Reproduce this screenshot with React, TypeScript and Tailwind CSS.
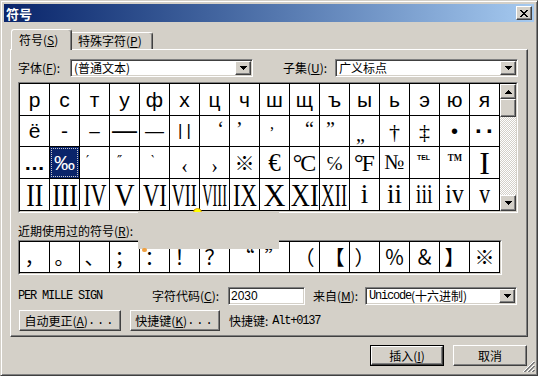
import React from "react";

const CJK = "font-['Noto_Sans_CJK_SC',sans-serif]";
const SANS = "font-['Liberation_Sans',sans-serif]";
const SERIF = "font-['Liberation_Serif','DejaVu_Serif',serif]";
const DJ = "font-['DejaVu_Sans',sans-serif]";
const MONO = "font-['Liberation_Mono',monospace] text-[12px] tracking-[-1.2px]";

const raised =
  "border border-t-white border-l-white border-r-[#404040] border-b-[#404040] shadow-[inset_-1px_-1px_#808080] bg-[#d4d0c8]";
const sunken =
  "border border-t-[#808080] border-l-[#808080] border-r-white border-b-white shadow-[inset_1px_1px_#404040,inset_-1px_-1px_#d4d0c8]";

const C = "items-center justify-center";

type G = [string, string, string?];

const row1: G[] = "рстуфхцчшщъыьэюя".split("").map((ch) => [ch, SANS + " text-[21px]"]);

const row2: G[] = [
  ["ё", SANS + " text-[21px]"],
  ["-", SANS + " text-[21px]"],
  ["–", SANS + " text-[19px]"],
  ["—", SANS + " text-[25px]"],
  ["—", SANS + " text-[19px]"],
  ["||", SANS + " text-[17px] tracking-[4px] pl-[4px]"],
  ["‘", SERIF + " text-[20px] leading-none", "items-start justify-end pr-[5px] pt-[3px]"],
  ["’", SERIF + " text-[20px] leading-none", "items-start justify-start pl-[6px] pt-[3px]"],
  [",", SERIF + " text-[16px] leading-none", "items-start justify-start pl-[10px] pt-0"],
  ["“", SERIF + " text-[20px] leading-none", "items-start justify-end pr-[5px] pt-[3px]"],
  ["”", SERIF + " text-[20px] leading-none", "items-start justify-start pl-[6px] pt-[3px]"],
  ["„", SERIF + " text-[20px] leading-none", "items-start justify-start pl-[6px] pt-[8px]"],
  ["†", SERIF + " text-[22px]"],
  ["‡", SERIF + " text-[22px]"],
  ["•", SANS + " text-[20px]"],
  ["··", SANS + " text-[24px] font-bold tracking-[3px] pl-[3px]"],
];

const row3: G[] = [
  ["…", SANS + " text-[21px] font-bold", "items-center justify-start pl-[4px]"],
  ["‰", "SEL"],
  ["′", DJ + " text-[14px] leading-none", "items-start justify-start pl-[6px] pt-[6px]"],
  ["″", DJ + " text-[14px] leading-none", "items-start justify-start pl-[7px] pt-[6px]"],
  ["‵", DJ + " text-[14px] leading-none", "items-start justify-start pl-[11px] pt-[6px]"],
  ["‹", SERIF + " text-[20px] pt-[6px]"],
  ["›", SERIF + " text-[20px] pt-[6px]"],
  ["※", CJK + " text-[20px]"],
  ["€", SERIF + " text-[25px]"],
  ["°C", SERIF + " text-[24px] tracking-[-2px] pr-[2px]"],
  ["℅", "font-['DejaVu_Serif',serif] text-[20px]"],
  ["°F", SERIF + " text-[24px] tracking-[-2px] pr-[2px]"],
  ["№", SERIF + " text-[21px]"],
  ["TEL", SANS + " text-[7px] font-bold leading-none", "items-start justify-center pt-[7px] pr-[2px]"],
  ["TM", SERIF + " text-[11px] font-bold leading-none scale-x-[0.8]", "items-start justify-center pt-[5px]"],
  ["I", SERIF + " text-[32px] leading-none"],
];

const row4: G[] = [
  ["II", SERIF + " text-[32px] leading-none scale-x-[0.8]"],
  ["III", SERIF + " text-[32px] leading-none scale-x-[0.8]"],
  ["IV", SERIF + " text-[32px] leading-none scale-x-[0.68]"],
  ["V", SERIF + " text-[32px] leading-none scale-x-[0.87]"],
  ["VI", SERIF + " text-[32px] leading-none scale-x-[0.71]"],
  ["VII", SERIF + " text-[32px] leading-none scale-x-[0.56]"],
  ["VIII", SERIF + " text-[32px] leading-none scale-x-[0.45]"],
  ["IX", SERIF + " text-[32px] leading-none scale-x-[0.71]"],
  ["X", SERIF + " text-[32px] leading-none scale-x-[0.95]"],
  ["XI", SERIF + " text-[32px] leading-none scale-x-[0.83]"],
  ["XII", SERIF + " text-[32px] leading-none scale-x-[0.58]"],
  ["i", SERIF + " text-[27px]"],
  ["ii", SERIF + " text-[27px]"],
  ["iii", SERIF + " text-[27px] scale-x-[0.75]"],
  ["iv", SERIF + " text-[27px] scale-x-[0.87]"],
  ["v", SERIF + " text-[27px] scale-x-[0.8]"],
];

const recent = ["，", "。", "、", "；", "：", "！", "？", "“", "”", "（", "【", "）", "％", "＆", "】", "※"];

function Cell({ g }: { g: G }) {
  const [ch, cls, align] = g;
  if (cls === "SEL") {
    return (
      <div className="flex h-full w-[30px] shrink-0 border-r border-b border-black bg-[#0a246a] p-px">
        <div className={"flex flex-1 items-center justify-center border border-dotted border-[#c8c8c8] text-white text-[21px] " + SANS}>
          {ch}
        </div>
      </div>
    );
  }
  return (
    <div className={"flex h-full w-[30px] shrink-0 border-r border-b border-black bg-white " + (align || C)}>
      <span className={"whitespace-nowrap text-black " + cls}>{ch}</span>
    </div>
  );
}

function Tri({ up }: { up?: boolean }) {
  return (
    <svg width="7" height="4" viewBox="0 0 7 4" shapeRendering="crispEdges">
      <path
        d={up ? "M3 0h1v1H3z M2 1h3v1H2z M1 2h5v1H1z M0 3h7v1H0z" : "M0 0h7v1H0z M1 1h5v1H1z M2 2h3v1H2z M3 3h1v1H3z"}
        fill="#000"
      />
    </svg>
  );
}

function Combo({ w, children }: { w: string; children: React.ReactNode }) {
  return (
    <div className={w + " h-[18px] bg-white p-px flex " + sunken}>
      <div className="flex flex-1 items-center pl-[2px] leading-[14px] whitespace-nowrap">{children}</div>
      <div className={"w-[16px] flex items-center justify-center " + raised}>
        <Tri />
      </div>
    </div>
  );
}

function Btn({ w, children }: { w: string; children: React.ReactNode }) {
  return <div className={w + " h-[21px] flex items-center justify-center " + raised}>{children}</div>;
}

export default function App() {
  return (
    <div
      className={
        "relative w-[538px] h-[376px] bg-[#d4d0c8] border border-t-[#d4d0c8] border-l-[#d4d0c8] border-r-[#404040] border-b-[#404040] shadow-[inset_1px_1px_#fff,inset_-1px_-1px_#808080] p-[3px] text-[12px] text-black " +
        CJK
      }
    >
      {/* title bar */}
      <div className="h-[18px] flex items-center justify-between pl-[2px] pr-[2px] bg-linear-to-r from-[#0a246a] to-[#a6caf0]">
        <span className="text-white font-bold text-[13px] leading-none">符号</span>
        <div className={"w-[16px] h-[14px] flex items-center justify-center " + raised}>
          <svg width="8" height="7" viewBox="0 0 8 7" shapeRendering="crispEdges">
            <path
              d="M0 0h2v1H0z M6 0h2v1H6z M1 1h2v1H1z M5 1h2v1H5z M2 2h4v1H2z M3 3h2v1H3z M2 4h4v1H2z M1 5h2v1H1z M5 5h2v1H5z M0 6h2v1H0z M6 6h2v1H6z"
              fill="#000"
            />
          </svg>
        </div>
      </div>

      <div className="pl-[6px] pr-[6px] pt-[7px]">
        {/* tabs */}
        <div className="relative z-10 flex items-end h-[21px] -mb-px">
          <div className="ml-px w-[61px] h-[21px] bg-[#d4d0c8] border-t border-l border-r border-t-white border-l-white border-r-[#404040] rounded-t-[3px] shadow-[inset_-1px_0_#808080] flex items-start pt-[2px] pl-[7px] leading-[16px]">
            符号(<u>S</u>)
          </div>
          <div className="mb-px w-[81px] h-[17px] bg-[#d4d0c8] border-t border-r border-t-white border-r-[#404040] rounded-tr-[3px] shadow-[inset_-1px_0_#808080] flex items-start pl-[6px] leading-[15px]">
            特殊字符(<u>P</u>)
          </div>
        </div>

        {/* panel */}
        <div className="w-[518px] h-[288px] border border-t-white border-l-white border-r-[#404040] border-b-[#404040] shadow-[inset_-1px_-1px_#808080] pl-[7px] pt-[9px]">
          <div className="flex items-center h-[18px]">
            <span className="w-[52px]">字体(<u>F</u>):</span>
            <Combo w="w-[183px]">(普通文本)</Combo>
            <span className="ml-[30px] w-[52px]">子集(<u>U</u>):</span>
            <Combo w="w-[183px]">广义标点</Combo>
          </div>

          {/* symbol grid */}
          <div className="mt-[5px] w-[500px] border border-t-[#808080] border-l-[#808080] border-r-white border-b-white">
            <div className="flex border border-t-black border-l-black border-r-[#d4d0c8] border-b-[#d4d0c8]">
              <div className="flex flex-col">
                <div className="flex h-[32px]">{row1.map((g, i) => <Cell key={i} g={g} />)}</div>
                <div className="flex h-[31px]">{row2.map((g, i) => <Cell key={i} g={g} />)}</div>
                <div className="flex h-[32px]">{row3.map((g, i) => <Cell key={i} g={g} />)}</div>
                <div className="flex h-[32px]">{row4.map((g, i) => <Cell key={i} g={g} />)}</div>
              </div>
              <div className="w-[16px] flex flex-col">
                <div className={"h-[15px] flex items-center justify-center " + raised}>
                  <Tri up />
                </div>
                <div className={"h-[18px] " + raised} />
                <div className="flex-1 bg-[image:repeating-conic-gradient(#fff_0_25%,#d4d0c8_0_50%)] bg-[length:2px_2px]" />
                <div className={"h-[16px] flex items-center justify-center " + raised}>
                  <Tri />
                </div>
              </div>
            </div>
          </div>

          <div className="mt-[10px] h-[16px] leading-[16px]">
            近期使用过的符号(<u>R</u>):
          </div>

          <div className="mt-px w-[484px] border border-t-[#808080] border-l-[#808080] border-r-white border-b-white">
            <div className="flex h-[33px] border border-t-black border-l-black border-r-[#d4d0c8] border-b-[#d4d0c8]">
              {recent.map((ch, i) => (
                <div key={i} className="flex h-[31px] w-[30px] shrink-0 items-center justify-center border-r border-b border-black bg-white text-[20px]">
                  {ch}
                </div>
              ))}
            </div>
          </div>

          <div className="mt-[12px] flex items-center h-[18px]">
            <span className={"w-[134px] " + MONO}>PER MILLE SIGN</span>
            <span className="w-[76px]">字符代码(<u>C</u>):</span>
            <div className={"w-[77px] h-[18px] bg-white flex items-center pl-[2px] text-[12px] leading-[14px] " + SANS + " " + sunken}>2030</div>
            <span className="ml-[8px] w-[52px]">来自(<u>M</u>):</span>
            <Combo w="w-[152px]">
              <span className={MONO}>Unicode</span>
              <span>(十六进制)</span>
            </Combo>
          </div>

          <div className="mt-[5px] flex items-center h-[21px]">
            <div className="ml-px">
              <Btn w="w-[102px]">
                自动更正(<u>A</u>)<span className={MONO + " !tracking-[2px]"}>...</span>
              </Btn>
            </div>
            <div className="ml-[9px]">
              <Btn w="w-[90px]">
                快捷键(<u>K</u>)<span className={MONO + " !tracking-[2px]"}>...</span>
              </Btn>
            </div>
            <span className="ml-[9px]">快捷键:</span>
            <span className={"ml-[4px] " + MONO}>Alt+0137</span>
          </div>
        </div>

        {/* dialog buttons */}
        <div className="mt-[8px] flex justify-end gap-[9px] pr-px">
          <div className="border border-black">
            <Btn w="w-[72px] !h-[19px]">
              插入(<u>I</u>)
            </Btn>
          </div>
          <Btn w="w-[74px]">取消</Btn>
        </div>
      </div>

      {/* size grip */}
      <svg className="absolute right-[2px] bottom-[2px]" width="12" height="12" viewBox="0 0 12 12" shapeRendering="crispEdges">
        <path d="M11 1L1 11 M11 5L5 11 M11 9L9 11" stroke="#808080" strokeWidth="1.5" />
        <path d="M11 0L0 11 M11 4L4 11 M11 8L8 11" stroke="#fff" strokeWidth="1" />
      </svg>

      {/* leftover tooltip marks on screen */}
      <div className="absolute left-[192px] top-[207px] w-[9px] h-[9px] rounded-full bg-[#ffff00] border border-[#e0a000]" />
      <div className="absolute left-[137px] top-[211px] w-[141px] h-[37px] bg-[#d4d0c8]" />
      <div className="absolute left-[141px] top-[247px] w-[5px] h-[4px] rounded-full bg-[#f0a040]" />
    </div>
  );
}
